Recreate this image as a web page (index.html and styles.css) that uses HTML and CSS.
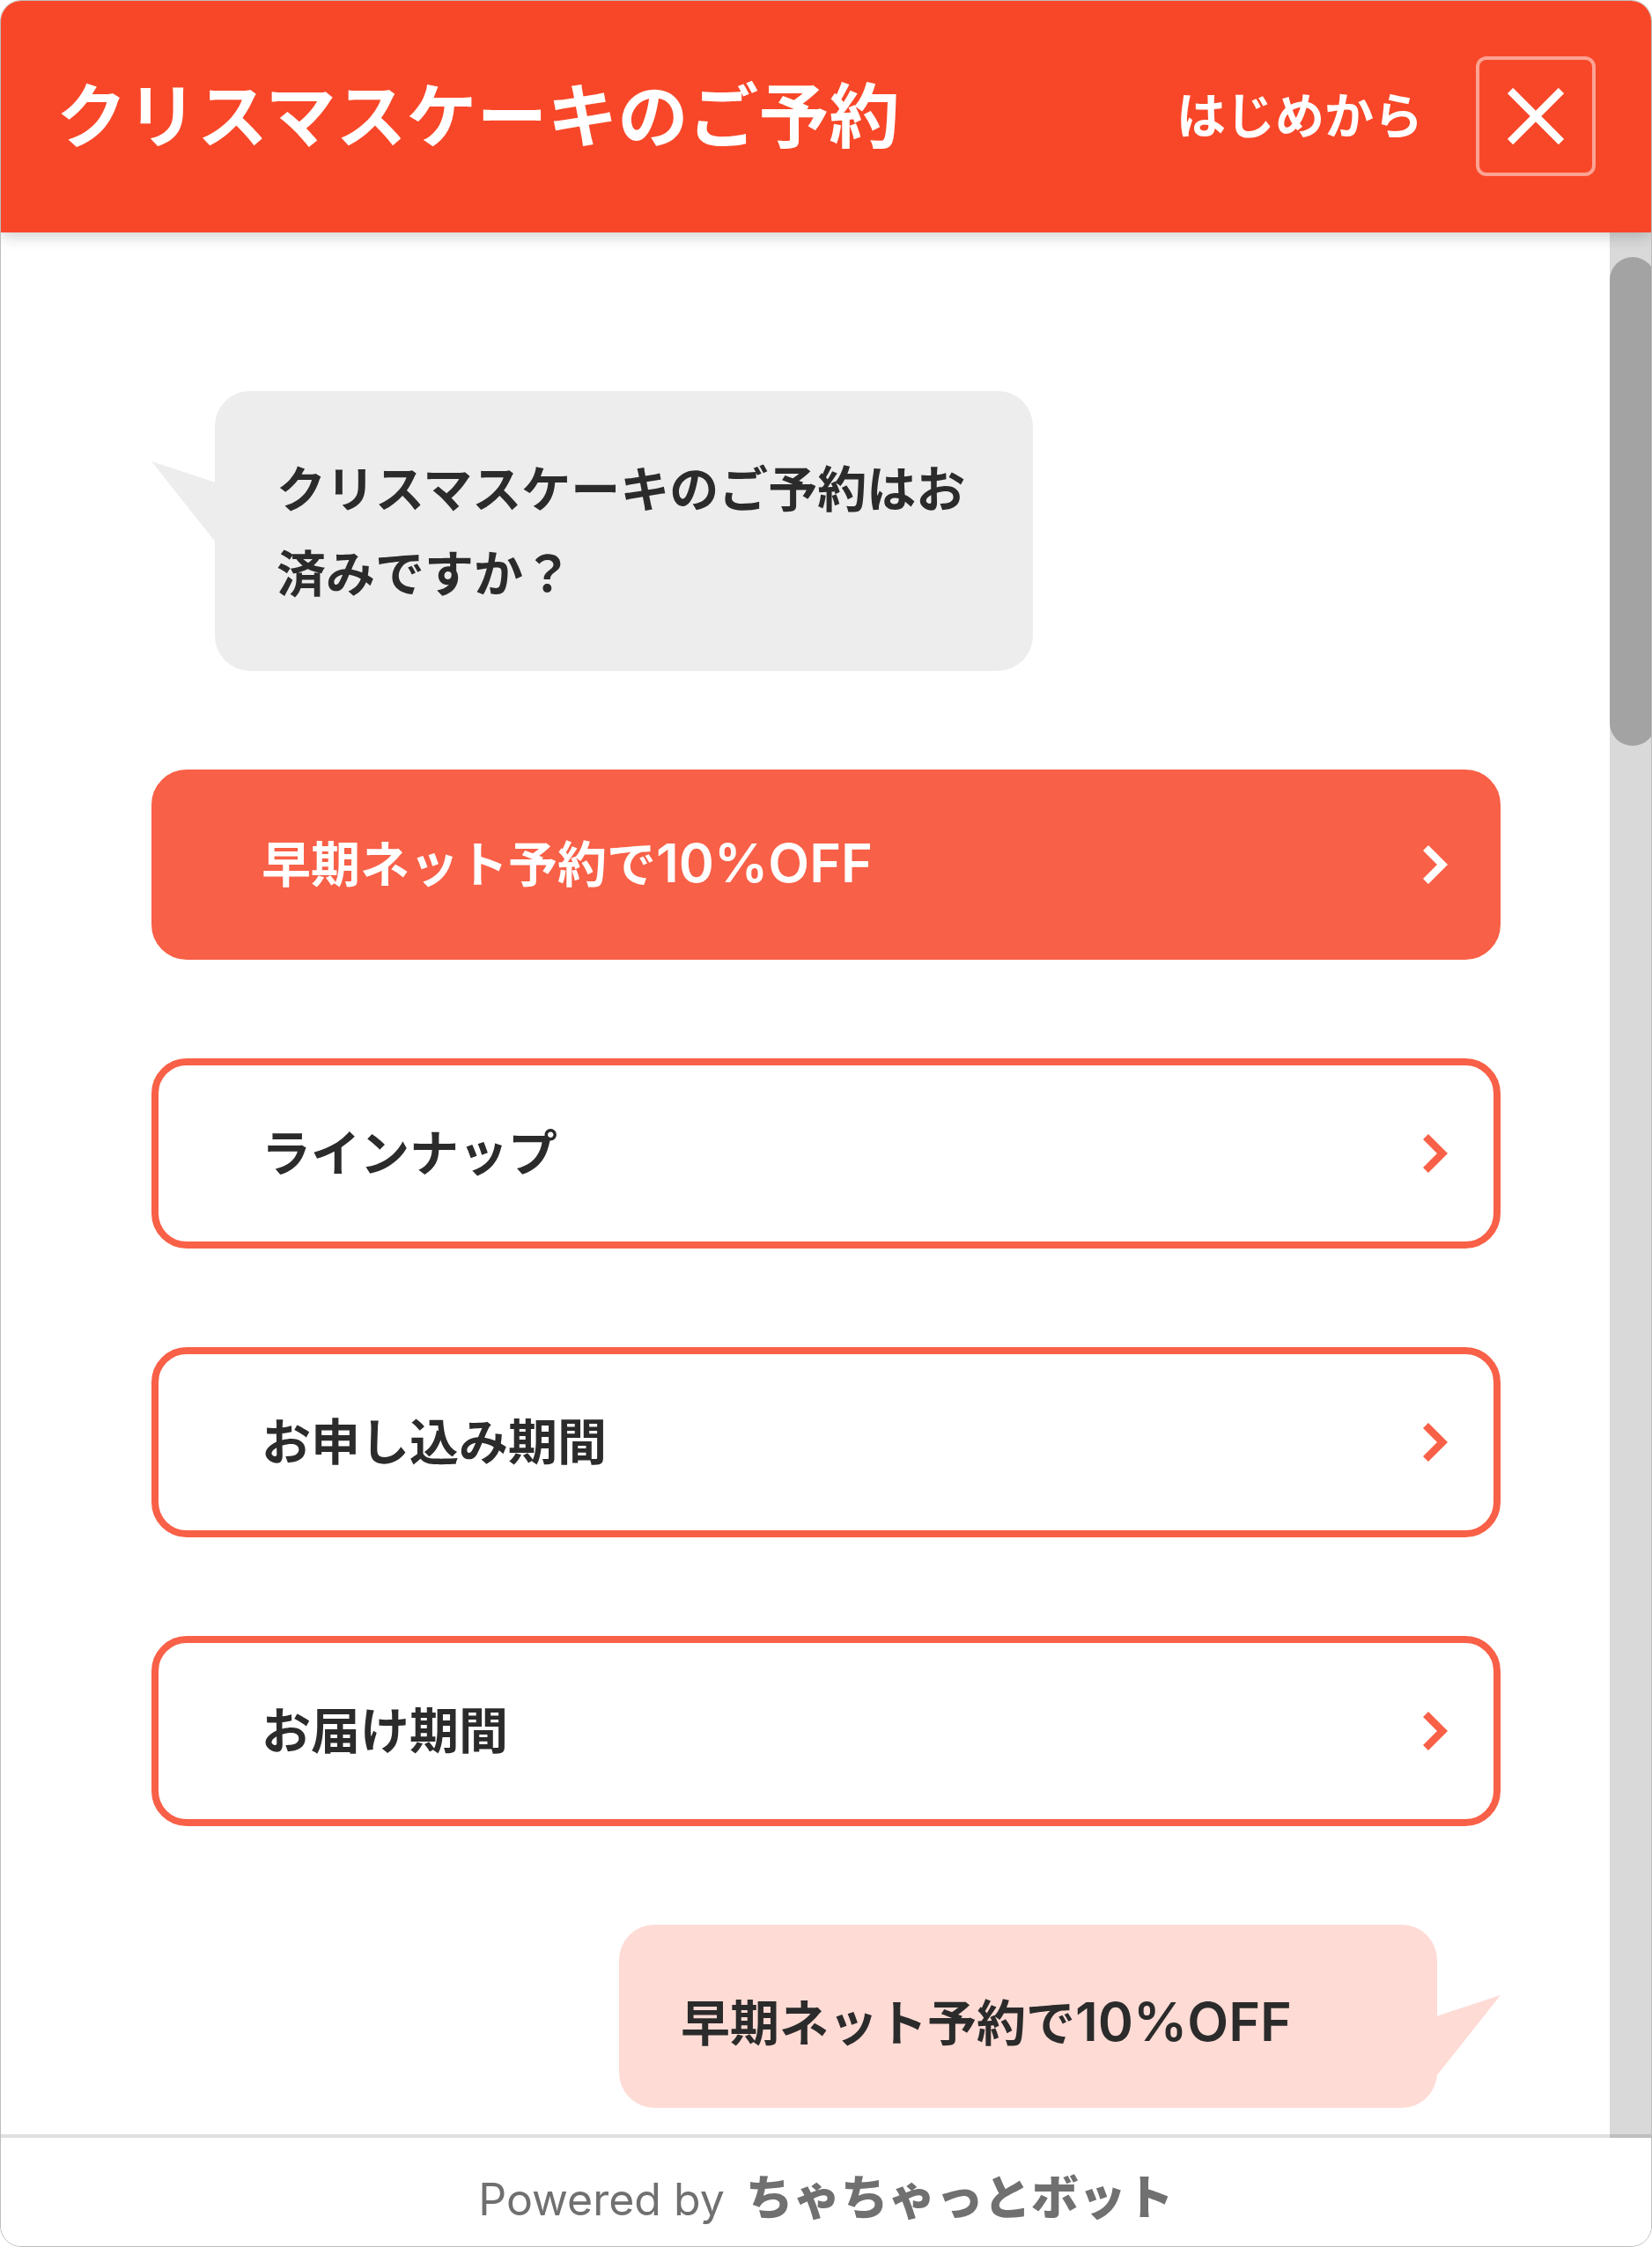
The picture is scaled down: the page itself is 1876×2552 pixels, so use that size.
FILE: index.html
```html
<!DOCTYPE html>
<html lang="ja">
<head>
  <meta charset="UTF-8" />
  <meta name="viewport" content="width=device-width, initial-scale=1.0"/>
  <title>クリスマスケーキのご予約</title>
  <link rel="stylesheet" href="styles.css">
</head>
<body>
  <div class="chat">
    <header class="chat-header">
      <h1>クリスマスケーキのご予約</h1>
      <button type="button" class="restart">はじめから</button>
      <button type="button" class="close" aria-label="閉じる">
        <svg width="64" height="64" viewBox="0 0 64 64" aria-hidden="true">
          <path d="M3 3L61 61M61 3L3 61" fill="none" stroke="currentColor" stroke-width="9"/>
        </svg>
      </button>
    </header>

    <div class="chat-body">
      <main class="messages">
        <div class="row">
          <p class="bubble bot">クリスマスケーキのご予約はお済みですか？</p>
        </div>

        <!-- 選択肢 -->
        <button type="button" class="choice selected">
          <span>早期ネット予約で<span class="latin">10%OFF</span></span>
          <svg width="28" height="44" viewBox="0 0 28 44" aria-hidden="true"><path d="M6 0L28 22L6 44L0 38L16 22L0 6Z" fill="currentColor"/></svg>
        </button>
        <button type="button" class="choice">
          <span>ラインナップ</span>
          <svg width="28" height="44" viewBox="0 0 28 44" aria-hidden="true"><path d="M6 0L28 22L6 44L0 38L16 22L0 6Z" fill="currentColor"/></svg>
        </button>
        <button type="button" class="choice">
          <span>お申し込み期間</span>
          <svg width="28" height="44" viewBox="0 0 28 44" aria-hidden="true"><path d="M6 0L28 22L6 44L0 38L16 22L0 6Z" fill="currentColor"/></svg>
        </button>
        <button type="button" class="choice">
          <span>お届け期間</span>
          <svg width="28" height="44" viewBox="0 0 28 44" aria-hidden="true"><path d="M6 0L28 22L6 44L0 38L16 22L0 6Z" fill="currentColor"/></svg>
        </button>

        <div class="row row-user">
          <p class="bubble user">早期ネット予約で<span class="latin">10%OFF</span></p>
        </div>
      </main>
      <div class="scrollbar"><div class="thumb"></div></div>
    </div>

    <footer class="chat-footer">
      <span>Powered by</span>
      <a href="#" class="logo">ちゃちゃっとボット</a>
    </footer>
  </div>
</body>
</html>
```
FILE: styles.css
```css
* {
  box-sizing: border-box;
}

body {
  margin: 0;
  background-color: #fff;
  color: #2b2b2b;
  font-family: Inter, "Noto Sans CJK JP", sans-serif;
  font-size: 56px;
}

button {
  font: inherit;
  cursor: pointer;
}

.chat {
  display: flex;
  flex-direction: column;
  height: 100vh;
  border: 1px solid #bdbdbd;
  border-radius: 24px;
  overflow: hidden;
}

/* ヘッダー */
.chat-header {
  display: flex;
  align-items: center;
  padding: 63px 63px 64px;
  background-color: #f84728;
  color: #fff;
  box-shadow: 0 4px 16px rgba(0, 0, 0, 0.2);
  position: relative;
  z-index: 1;
}

.chat-header h1 {
  flex: 1;
  margin: 0;
  font-size: 80px;
  font-weight: 700;
  line-height: 96px;
}

.restart {
  margin-right: 60px;
  padding: 0;
  border: none;
  background: none;
  color: inherit;
  font-weight: 700;
  line-height: 80px;
}

.close {
  display: flex;
  align-items: center;
  justify-content: center;
  width: 136px;
  height: 136px;
  padding: 0;
  border: 4px solid rgba(255, 255, 255, 0.5);
  border-radius: 12px;
  background: none;
  color: inherit;
}

/* メッセージ */
.chat-body {
  flex: 1;
  display: flex;
  min-height: 0;
}

.messages {
  flex: 1;
  display: flex;
  flex-direction: column;
  gap: 112px;
  padding: 180px 124px 34px 171px;
  overflow: hidden;
}

.row {
  display: flex;
  padding: 0 72px;
}

.row-user {
  justify-content: flex-end;
}

.bubble {
  position: relative;
  flex: 0 1 929px;
  margin: 0;
  padding: 64px 70px 48px;
  border-radius: 40px;
  font-weight: 700;
  line-height: 96px;
}

.bot {
  padding-bottom: 62px;
  background-color: #ededed;
}

.user {
  background-color: #ffdbd5;
}

/* 吹き出しのしっぽ */
.bubble::before {
  content: "";
  position: absolute;
  top: 80px;
  width: 73px;
  height: 92px;
  background-color: inherit;
}

.bot::before {
  right: calc(100% - 1px);
  clip-path: polygon(0 0, 100% 26%, 100% 100%);
}

.user::before {
  left: calc(100% - 1px);
  clip-path: polygon(100% 0, 0 26%, 0 100%);
}

.latin {
  font-size: 61px;
  font-weight: 600;
  line-height: 1;
}

.choice {
  flex: none;
  display: flex;
  align-items: center;
  justify-content: space-between;
  padding: 52px 52px 52px 117px;
  border: 8px solid #f86047;
  border-radius: 40px;
  background-color: #fff;
  color: #2b2b2b;
  font-weight: 700;
  line-height: 96px;
  text-align: left;
}

.choice svg {
  color: #f86047;
}

.choice.selected,
.choice.selected svg {
  color: #fff;
}

.choice.selected {
  background-color: #f86047;
}

.scrollbar {
  width: 47px;
  padding-top: 28px;
  background-color: #d9d9d9;
  overflow: hidden;
}

.thumb {
  width: 52px;
  height: 26%;
  border-radius: 26px;
  background-color: #a3a3a3;
}

/* フッター */
.chat-footer {
  position: relative;
  display: flex;
  align-items: baseline;
  justify-content: center;
  gap: 24px;
  margin-top: -4px;
  padding: 29px 0 13px;
  border-top: 4px solid rgba(0, 0, 0, 0.12);
  background-color: #fff;
  background-clip: padding-box;
  color: #707070;
  font-size: 50px;
  line-height: 80px;
}

.logo {
  color: inherit;
  font-size: 54px;
  font-weight: 900;
  text-decoration: none;
}
```
